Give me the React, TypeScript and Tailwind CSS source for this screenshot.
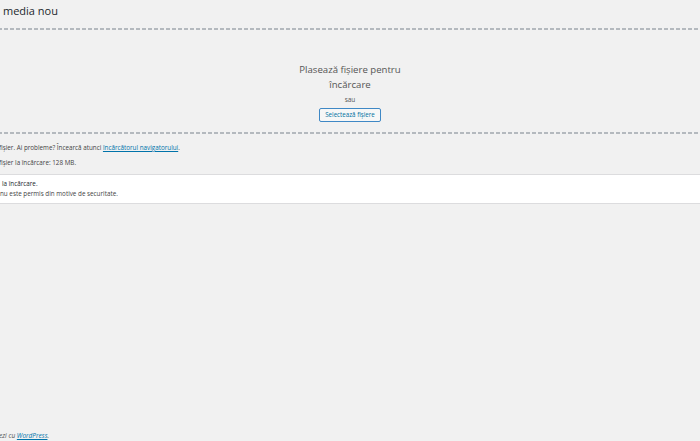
const dashRule =
  "h-[2px] w-full bg-[repeating-linear-gradient(90deg,#b4b9be_0px,#b4b9be_4px,transparent_4px,transparent_6px)]";

export default function App() {
  return (
    <div className="relative h-[441px] overflow-hidden bg-[#f1f1f1] font-['Open_Sans','Noto_Sans',sans-serif] text-[#444]">
      {/* Header */}
      <h1 className="pl-[3px] pt-[1px] text-[11px] leading-[20px] text-[#23282d]">
        media nou
      </h1>

      {/* Drop zone */}
      <div className="-mx-[8px] mt-[7px] flex h-[106px] flex-col items-center">
        <div className={dashRule} />
        <p className="mt-[32px] text-center text-[9.6px] leading-[15px] text-[#555]">
          Plasează fișiere pentru
          <br />
          încărcare
        </p>
        <p className="mt-[3px] text-[6.5px] leading-[10px] text-[#555]">sau</p>
        <button className="mt-[3px] h-[14px] rounded-[2px] border border-[#3f88c5] bg-[#f6f7f7] px-[5px] text-[6.2px] leading-[12px] text-[#0071a1]">
          Selectează fișiere
        </button>
        <div className={`mt-auto ${dashRule}`} />
      </div>

      {/* Info lines */}
      <div className="-ml-[1px] mt-[10px] space-y-[8px] text-[6.3px] leading-[7px] text-[#444]">
        <p>
          fișier. Ai probleme? Încearcă atunci{" "}
          <a className="text-[#0073aa] underline">încărcătorul navigatorului</a>.
        </p>
        <p>fișier la încărcare: 128 MB.</p>
      </div>

      {/* Notice */}
      <div className="mt-[8px] border-y border-[#dcdcde] bg-white py-[4px] text-[6.3px] leading-[10px] text-[#444]">
        <p className="pl-[2px] font-medium text-[#23282d]">la încărcare.</p>
        <p>nu este permis din motive de securitate.</p>
      </div>

      {/* Footer */}
      <p className="absolute bottom-[1px] -left-[1px] text-[6.5px] italic leading-[8px] text-[#555]">
        ezi cu <a className="text-[#0073aa] underline">WordPress</a>.
      </p>
    </div>
  );
}
